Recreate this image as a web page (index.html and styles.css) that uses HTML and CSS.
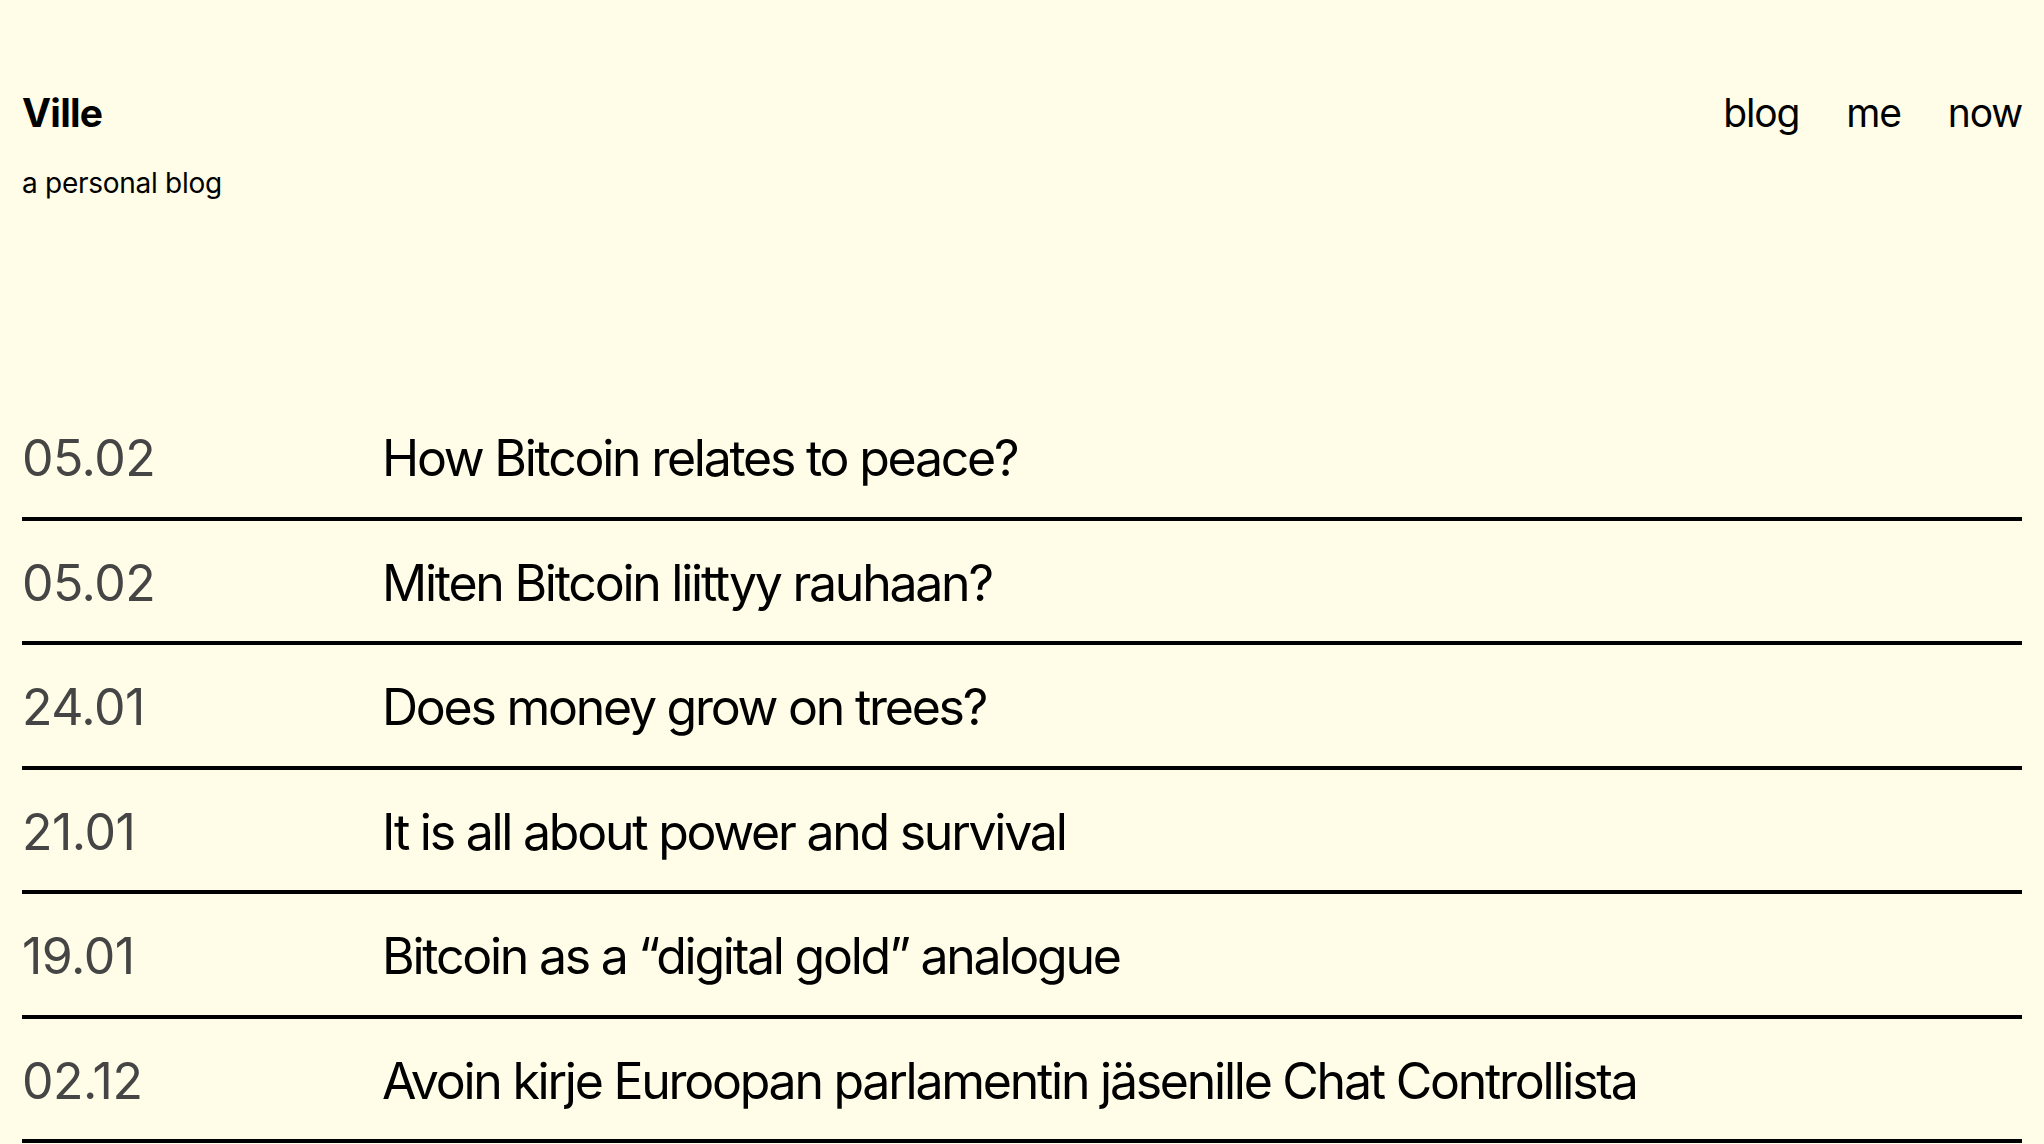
FILE: index.html
```html
<!DOCTYPE html>
<html lang="en">
<head>
<meta charset="utf-8">
<title>Ville - a personal blog</title>
<link rel="stylesheet" href="styles.css">
</head>
<body>
<div class="page">
  <header class="header">
    <div class="brand">
      <a class="brand-name" href="#">Ville</a>
      <p class="brand-tagline">a personal blog</p>
    </div>
    <nav class="nav">
      <a href="#">blog</a>
      <a href="#">me</a>
      <a href="#">now</a>
    </nav>
  </header>
  <main>
    <ul class="posts">
      <li class="post"><span class="post-date">05.02</span><a class="post-title" href="#">How Bitcoin relates to peace?</a></li>
      <li class="post"><span class="post-date">05.02</span><a class="post-title" href="#">Miten Bitcoin liittyy rauhaan?</a></li>
      <li class="post"><span class="post-date">24.01</span><a class="post-title" href="#">Does money grow on trees?</a></li>
      <li class="post"><span class="post-date">21.01</span><a class="post-title" href="#">It is all about power and survival</a></li>
      <li class="post"><span class="post-date">19.01</span><a class="post-title" href="#">Bitcoin as a “digital gold” analogue</a></li>
      <li class="post"><span class="post-date">02.12</span><a class="post-title" href="#">Avoin kirje Euroopan parlamentin jäsenille Chat Controllista</a></li>
    </ul>
  </main>
</div>
</body>
</html>
```
FILE: styles.css
```css
html, body {
  margin: 0;
  padding: 0;
  background: #fffde7;
  color: #000;
  font-family: Inter, "Noto Sans", sans-serif;
}

a {
  color: inherit;
  text-decoration: none;
}

.page {
  padding: 0 22px;
}

.header {
  display: flex;
  justify-content: space-between;
  align-items: flex-start;
  padding-top: 89px;
}

.brand-name {
  display: block;
  font-size: 39px;
  line-height: 48px;
  font-weight: 700;
  letter-spacing: -0.02em;
}

.brand-tagline {
  margin: 28px 0 0;
  font-size: 28px;
  line-height: 36px;
  letter-spacing: -0.01em;
}

.nav {
  display: flex;
  gap: 47px;
  font-size: 39px;
  line-height: 48px;
  letter-spacing: -0.03em;
}

.posts {
  list-style: none;
  margin: 195px 0 0;
  padding: 0;
}

.post {
  display: grid;
  grid-template-columns: 360px 1fr;
  padding: 32px 0 28.5px;
  border-bottom: 4px solid #000;
  font-size: 50px;
  line-height: 60px;
  letter-spacing: -0.045em;
}

.post-date {
  color: #454545;
  letter-spacing: -0.01em;
}

.post-title {
  color: #000;
}
```
